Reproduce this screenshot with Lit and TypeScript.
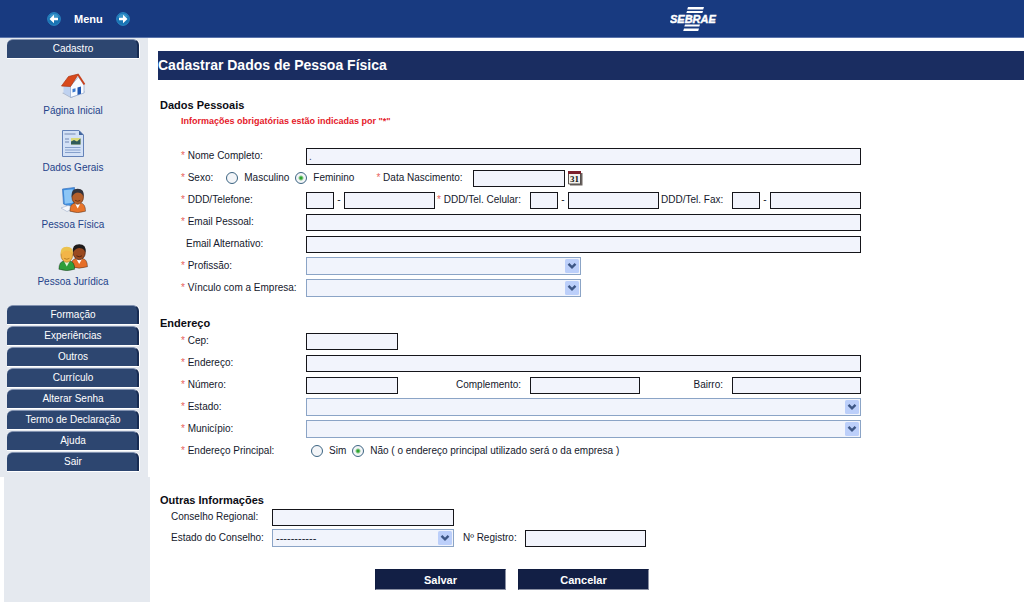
import { LitElement, html, svg, css, nothing } from "lit";
import { customElement } from "lit/decorators.js";

const circleArrow = (flip: boolean) => html`
  <svg width="14" height="14" viewBox="0 0 14 14" aria-hidden="true">
    <circle cx="7" cy="7" r="6.4" fill="#1974b4" stroke="#2f8fca" stroke-width=".8" />
    <path d="M2 5a5.4 5.4 0 0 1 10 0a9 5 0 0 1-10 0z" fill="#5bb5e0" opacity=".5" />
    <g transform=${flip ? "translate(14 0) scale(-1 1)" : ""}>
      <path d="M2.500 7L7 2.800v2.900h4v2.600H7v2.900z" fill="#fff" />
    </g>
  </svg>`;

const person = (hair: string, skin: string, shade: string, coat: string, inner: string) => svg`
  <path d="M1 25q0-8 6-9h6q6 1 6 9q-9 3-18 0z" fill=${coat} stroke="#00000077" stroke-width=".8" />
  <path d="M6.5 16L10 22l3.5-6z" fill=${inner} />
  <ellipse cx="10" cy="10" rx="6.6" ry="7.6" fill=${skin} stroke=${shade} stroke-width=".8" />
  <path d="M3 10Q2 1.200 10 1.200T17 10Q15.500 5.600 11 5.400T3 10z" fill=${hair} />
  <path d="M7 13.500q3 2 6 0" fill="none" stroke=${shade} stroke-width="1" />`;

const icons = {
  home: html`<svg width="26" height="26" viewBox="0 0 26 26" aria-hidden="true">
    <path d="M2 20l9 5 14-6-5-4z" fill="#a9b4c6" />
    <path d="M3.500 12l7-5 2 12-2 5-7-4z" fill="#bfd2f0" />
    <path d="M10.500 13l8-9 5.500 8v8l-13.500 4.500z" fill="#f8fbff" stroke="#8fa6cf" stroke-width=".7" />
    <path d="M1.500 13L8.500 3.500 18.500 1l-8 12.500z" fill="#d8491c" stroke="#a93210" stroke-width=".7" />
    <path d="M18 1.500l6.500 10" stroke="#c9401a" stroke-width="1.800" fill="none" />
    <path d="M17.500 14.500l3.500-1v7.200l-3.500 1.200z" fill="#1f56b0" />
    <path d="M12.500 16l3-.8v3.400l-3 .8z" fill="#3d7bd0" />
  </svg>`,
  page: html`<svg width="24" height="29" viewBox="0 0 24 29" aria-hidden="true">
    <path d="M1.500 1.500H18l4.500 4.500v21.500h-21z" fill="#d3e1f6" stroke="#6482b8" />
    <path d="M18 1.500V6h4.500z" fill="#42669f" />
    <path d="M3.500 5h11M4 10h4M4 13h4" stroke="#7388b3" />
    <path d="M10 9h9.500v6.500H10z" fill="#d9d97c" />
    <path d="M10 15.500v-3l3-1.500 3 1.500 3.500-3v6z" fill="#2f5a58" />
    <path d="M4 18.500h15.500M4 21h15.500M4 23.500h15.500" stroke="#86a0cb" />
  </svg>`,
  monitor: html`<svg width="26" height="26" viewBox="0 0 26 26" aria-hidden="true">
    <path d="M2.500 2l12-1.500v17l-6 1.500-5-2z" fill="#3f8fe0" stroke="#3d74bd" stroke-width=".7" />
    <path d="M3.800 3.300l9-1v13.500l-8 1z" fill="#8cc6f6" />
    <path d="M1 21l7-2.500 7 2-8 4z" fill="#f6f8fc" stroke="#9fb0cd" stroke-width=".6" />
    <g transform="translate(9 .5) scale(.87 .95)">${person("#33333b", "#b5602b", "#6e3212", "#e8742a", "#ffffff")}</g>
  </svg>`,
  people: html`<svg width="30" height="28" viewBox="0 0 30 28" aria-hidden="true">
    <g transform="translate(12 0) scale(.92 .95)">${person("#1f1b1b", "#9a4a20", "#51230f", "#e66f28", "#ffffff")}</g>
    <g transform="translate(0 2.500) scale(.88 .95)">${person("#ecc24e", "#f2b548", "#b57a20", "#2f9e3a", "#e4f4da")}</g>
  </svg>`,
};

const links = [
  { icon: icons.home, label: "Página Inicial" },
  { icon: icons.page, label: "Dados Gerais" },
  { icon: icons.monitor, label: "Pessoa Física" },
  { icon: icons.people, label: "Pessoa Jurídica" },
];

const groups = ["Formação", "Experiências", "Outros", "Currículo", "Alterar Senha", "Termo de Declaração", "Ajuda", "Sair"];

const label = (id: string, text: string, required = true) => html`
  <label for=${id}>${required ? html`<span class="star">*</span> ` : nothing}${text}</label>`;

const box = (id: string, cls = "", value = "") => html`<input type="text" id=${id} class=${cls} .value=${value} />`;

const dropdown = (id: string, text = "", cls = "") => html`
  <span class="select ${cls}">
    <select id=${id}><option>${text}</option></select>
    <svg width="14" height="14" viewBox="0 0 14 14" aria-hidden="true">
      <rect width="14" height="14" rx="1.500" fill="#bccffa" />
      <path d="M3.500 4.800L7 8.300l3.500-3.500" fill="none" stroke="#3d5685" stroke-width="2.400" />
    </svg>
  </span>`;

@customElement("app-root")
export class AppRoot extends LitElement {
  static styles = css`
    :host {
      display: flex;
      flex-direction: column;
      min-height: 100vh;
      background: #fff;
      color: #14182c;
      font: 10px/18px "Liberation Sans", Arial, sans-serif;
    }
    * { box-sizing: border-box; }
    svg { display: block; flex: none; }
    a { text-decoration: none; color: inherit; }
    header {
      display: grid;
      grid-template-columns: 148px 522fr 354fr;
      align-items: center;
      height: 38px;
      background: #183a80;
      border-bottom: 1px solid #5a74ab;
      color: #fff;
    }
    .menu {
      display: flex;
      align-items: center;
      gap: 13px;
      padding-left: 47px;
      font-size: 11px;
      font-weight: bold;
    }
    .menu button { padding: 0; border: 0; background: none; }
    .logo { grid-column: 3; }
    .body { display: flex; flex: 1; }
    aside { display: flex; flex-direction: column; width: 150px; flex: none; }
    nav {
      width: 148px;
      padding: 1px 9px 4px 7px;
      background: #e5e9ef;
    }
    .filler { flex: 1; margin-left: 4px; background: #e5e9ef; }
    .group {
      display: block;
      height: 19px;
      margin-bottom: 2px;
      padding-left: 2px;
      border-top: 1px solid #8292b0;
      border-right: 2px solid #182c52;
      border-radius: 6px 6px 0 0;
      background: #2d4670;
      box-shadow: 0 1px 0 #fff, 1px 0 0 #fff;
      color: #fff;
      text-align: center;
    }
    .links { padding: 10px 0 7px; }
    .link {
      display: flex;
      flex-direction: column;
      align-items: center;
      height: 57px;
      color: #24438a;
    }
    .pic { display: grid; place-items: center; height: 32px; }
    main { flex: 1; min-width: 0; padding: 13px 0 12px 8px; }
    h1 {
      margin: 0 0 17px;
      background: #1a2d61;
      color: #fff;
      font-size: 14px;
      line-height: 29px;
    }
    h2 { margin: 0 0 0 2px; font-size: 11px; line-height: 16px; color: #0c0c14; }
    .note { margin: 0 0 18px 23px; color: #e5182a; font-size: 9px; font-weight: bold; line-height: 16px; }
    .rows {
      display: grid;
      grid-template-columns: 125px minmax(0, 555px);
      grid-auto-rows: 18px;
      row-gap: 4px;
      margin: 0 20px 18px 23px;
    }
    .rows.address { margin-top: 1px; margin-bottom: 32px; }
    .rows.extra {
      grid-template-columns: 101px 182px auto 121px;
      justify-content: start;
      row-gap: 3px;
      margin-left: 13px;
      margin-bottom: 22px;
    }
    .rows.extra > :nth-child(3) { grid-column: 1; }
    .registry { padding: 0 8px 0 9px; }
    label { white-space: nowrap; }
    .star { color: #e8625c; }
    .indent { padding-left: 5px; }
    input[type="text"] {
      width: 100%;
      height: 17px;
      margin: 1px 0 0;
      padding: 0 2px;
      border: 1px solid #15151a;
      border-radius: 0;
      background: #f2f4fc;
      color: #444b66;
      font: inherit;
    }
    input.short { width: 92px; }
    input.medium { width: 110px; }
    .cells { display: grid; grid-template-columns: 131px 93px 129px 73px 1fr; }
    .cells .right { text-align: right; padding-right: 9px; }
    .cells .lead { padding-left: 2px; }
    .pair { display: grid; grid-template-columns: 28px 10px 91px; text-align: center; }
    .line { display: flex; align-items: center; grid-column: 1 / -1; }
    .choice { display: flex; align-items: center; gap: 6px; margin-right: 6px; }
    input[type="radio"] {
      appearance: none;
      width: 12px;
      height: 12px;
      margin: 0;
      border: 1px solid #3c6482;
      border-radius: 50%;
      background: #f3f5f8;
    }
    input[type="radio"]:checked { background: radial-gradient(circle, #2fa52f 0 1px, #f3f5f8 3px); }
    .sex-title { margin-right: 13px; }
    .birth { margin: 0 10px 0 16px; }
    .calendar { margin-left: 3px; padding: 0; border: 0; background: none; }
    .main-address { padding-left: 5px; grid-column: 2; }
    .select { display: grid; width: 100%; }
    .select > * { grid-area: 1 / 1; }
    .select svg { justify-self: end; align-self: center; margin-right: 2px; pointer-events: none; }
    .select.half { width: 275px; }
    select {
      appearance: none;
      width: 100%;
      height: 18px;
      margin: 0;
      padding: 0 20px 0 3px;
      border: 1px solid #8ba4c6;
      border-radius: 0;
      background: #f1f4fc;
      color: #14182c;
      font: 11px "Liberation Sans", Arial, sans-serif;
    }
    .actions { display: flex; gap: 12px; margin-left: 217px; }
    .actions button {
      width: 131px;
      height: 21px;
      padding: 0;
      border: 1px solid #101c40;
      border-right-color: #8a90a3;
      border-bottom-color: #8a90a3;
      background: #121f45;
      color: #fff;
      font: bold 11px "Liberation Sans", Arial, sans-serif;
    }
  `;

  render() {
    return html`
      <header>
        <div class="menu">
          <button type="button" aria-label="Recolher menu">${circleArrow(false)}</button>
          <span>Menu</span>
          <button type="button" aria-label="Expandir menu">${circleArrow(true)}</button>
        </div>
        <svg class="logo" width="48" height="26" viewBox="0 0 48 26" role="img" aria-label="SEBRAE">
          <g fill="#fff">
            <path d="M18 1h16l-.8 2.500H17.200zM17 5h16l-.6 2H16.400zM15 18.500h15l-.7 2H14.300zM14 22.500h15l-.8 2.500H13.200z" />
            <text x="0" y="16.500" font-size="11" font-weight="bold" font-style="italic" stroke="#fff" stroke-width=".4">SEBRAE</text>
          </g>
        </svg>
      </header>
      <div class="body">
        <aside>
          <nav>
            <a class="group" href="#">Cadastro</a>
            <div class="links">
              ${links.map((l) => html`<a class="link" href="#"><span class="pic">${l.icon}</span>${l.label}</a>`)}
            </div>
            ${groups.map((g) => html`<a class="group" href="#">${g}</a>`)}
          </nav>
          <div class="filler"></div>
        </aside>
        <main>
          <h1>Cadastrar Dados de Pessoa Física</h1>
          <form>
            <h2>Dados Pessoais</h2>
            <p class="note">Informações obrigatórias estão indicadas por "*"</p>
            <div class="rows">
              ${label("nome", "Nome Completo:")} ${box("nome", "", ".")}
              <div class="line" role="group" aria-labelledby="sexo">
                <span id="sexo" class="sex-title"><span class="star">*</span> Sexo:</span>
                <label class="choice"><input type="radio" name="sexo" />Masculino</label>
                <label class="choice"><input type="radio" name="sexo" checked />Feminino</label>
                <label class="birth" for="nascimento"><span class="star">*</span> Data Nascimento:</label>
                ${box("nascimento", "short")}
                <button class="calendar" type="button" aria-label="Abrir calendário">
                  <svg width="15" height="15" viewBox="0 0 15 15">
                    <path d="M2 2h12.500v12.500H2z" fill="#6a625f" />
                    <path d="M.5.5h12v12.500H.5z" fill="#f4f1ec" stroke="#55504e" />
                    <path d="M0 0h13v3H0z" fill="#7c1f2b" />
                    <text x="6.500" y="11" text-anchor="middle" font-family="Liberation Serif, serif" font-size="9" font-weight="bold" fill="#111">31</text>
                  </svg>
                </button>
              </div>
              ${label("tel-ddd", "DDD/Telefone:")}
              <div class="cells">
                <span class="pair">${box("tel-ddd")}<span>-</span><input type="text" aria-label="Telefone" /></span>
                ${label("cel-ddd", "DDD/Tel. Celular:")}
                <span class="pair">${box("cel-ddd")}<span>-</span><input type="text" aria-label="Celular" /></span>
                <label class="lead" for="fax-ddd">DDD/Tel. Fax:</label>
                <span class="pair">${box("fax-ddd")}<span>-</span><input type="text" aria-label="Fax" /></span>
              </div>
              ${label("email", "Email Pessoal:")} ${box("email")}
              <label class="indent" for="email-alt">Email Alternativo:</label> ${box("email-alt")}
              ${label("profissao", "Profissão:")} ${dropdown("profissao", "", "half")}
              ${label("vinculo", "Vínculo com a Empresa:")} ${dropdown("vinculo", "", "half")}
            </div>
            <h2>Endereço</h2>
            <div class="rows address">
              ${label("cep", "Cep:")} ${box("cep", "short")}
              ${label("endereco", "Endereço:")} ${box("endereco")}
              ${label("numero", "Número:")}
              <div class="cells">
                ${box("numero", "short")}
                <label class="right" for="complemento">Complemento:</label>
                ${box("complemento", "medium")}
                <label class="right" for="bairro">Bairro:</label>
                ${box("bairro")}
              </div>
              ${label("estado", "Estado:")} ${dropdown("estado")}
              ${label("municipio", "Município:")} ${dropdown("municipio")}
              <span id="principal"><span class="star">*</span> Endereço Principal:</span>
              <div class="line main-address" role="group" aria-labelledby="principal">
                <label class="choice"><input type="radio" name="principal" />Sim</label>
                <label class="choice"><input type="radio" name="principal" checked />Não ( o endereço principal utilizado será o da empresa )</label>
              </div>
            </div>
            <h2>Outras Informações</h2>
            <div class="rows extra">
              ${label("conselho", "Conselho Regional:", false)} ${box("conselho")}
              ${label("estado-conselho", "Estado do Conselho:", false)} ${dropdown("estado-conselho", "-----------")}
              <label class="registry" for="registro">Nº Registro:</label> ${box("registro")}
            </div>
            <div class="actions">
              <button type="button">Salvar</button>
              <button type="button">Cancelar</button>
            </div>
          </form>
        </main>
      </div>
    `;
  }
}
